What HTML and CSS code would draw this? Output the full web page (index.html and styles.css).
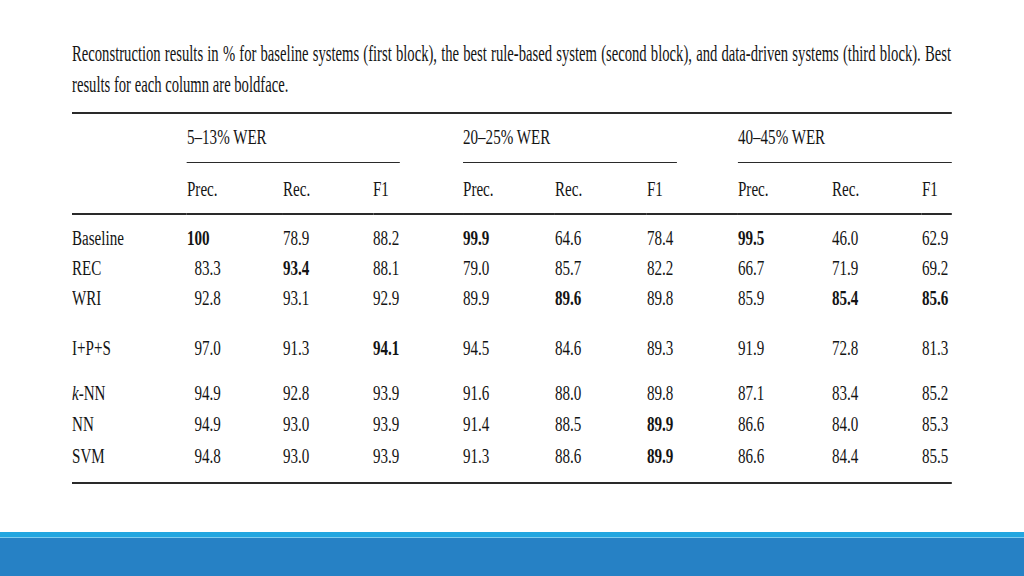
FILE: index.html
```html
<!DOCTYPE html>
<html lang="en">
<head>
<meta charset="utf-8">
<title>Reconstruction results</title>
<link rel="stylesheet" href="styles.css">
</head>
<body>
<div class="slide">
  <main class="content">
    <figure class="figure">
      <p class="caption">Reconstruction results in % for baseline systems (first block), the best rule-based system (second block), and data-driven systems (third block). Best results for each column are boldface.</p>
      <table class="results">
        <colgroup>
          <col class="c-label">
          <col class="c-p1"><col class="c-r1"><col class="c-f1">
          <col class="c-p2"><col class="c-r2"><col class="c-f2">
          <col class="c-p3"><col class="c-r3"><col class="c-f3">
        </colgroup>
        <thead>
          <tr>
            <th class="corner" rowspan="2"></th>
            <th class="group" colspan="3"><div class="group-label g1">5–13% WER</div></th>
            <th class="group" colspan="3"><div class="group-label g2">20–25% WER</div></th>
            <th class="group" colspan="3"><div class="group-label g3">40–45% WER</div></th>
          </tr>
          <tr class="sub">
            <th>Prec.</th><th>Rec.</th><th>F1</th>
            <th>Prec.</th><th>Rec.</th><th>F1</th>
            <th>Prec.</th><th>Rec.</th><th>F1</th>
          </tr>
        </thead>
        <tbody class="block block-base">
          <tr><td class="label">Baseline</td><td class="best whole">100</td><td>78.9</td><td>88.2</td><td class="best">99.9</td><td>64.6</td><td>78.4</td><td class="best">99.5</td><td>46.0</td><td>62.9</td></tr>
          <tr><td class="label">REC</td><td>83.3</td><td class="best">93.4</td><td>88.1</td><td>79.0</td><td>85.7</td><td>82.2</td><td>66.7</td><td>71.9</td><td>69.2</td></tr>
          <tr><td class="label">WRI</td><td>92.8</td><td>93.1</td><td>92.9</td><td>89.9</td><td class="best">89.6</td><td>89.8</td><td>85.9</td><td class="best">85.4</td><td class="best">85.6</td></tr>
        </tbody>
        <tbody class="block block-rule">
          <tr><td class="label">I+P+S</td><td>97.0</td><td>91.3</td><td class="best">94.1</td><td>94.5</td><td>84.6</td><td>89.3</td><td>91.9</td><td>72.8</td><td>81.3</td></tr>
        </tbody>
        <tbody class="block block-data">
          <tr><td class="label"><i>k</i>-NN</td><td>94.9</td><td>92.8</td><td>93.9</td><td>91.6</td><td>88.0</td><td>89.8</td><td>87.1</td><td>83.4</td><td>85.2</td></tr>
          <tr><td class="label">NN</td><td>94.9</td><td>93.0</td><td>93.9</td><td>91.4</td><td>88.5</td><td class="best">89.9</td><td>86.6</td><td>84.0</td><td>85.3</td></tr>
          <tr><td class="label">SVM</td><td>94.8</td><td>93.0</td><td>93.9</td><td>91.3</td><td>88.6</td><td class="best">89.9</td><td>86.6</td><td>84.4</td><td>85.5</td></tr>
        </tbody>
      </table>
    </figure>
  </main>
  <footer class="bar">
    <div class="bar-strip"></div>
    <div class="bar-line"></div>
    <div class="bar-main"></div>
  </footer>
</div>
</body>
</html>
```
FILE: styles.css
```css
:root {
  --k-cap: 0.6104;
  --k-tab: 0.735;
  --ink: #141414;
  --rule: #2a2a2a;
}

html, body {
  margin: 0;
  padding: 0;
  overflow: hidden;
  background: #ffffff;
}

.slide {
  width: 1024px;
  height: 576px;
  display: flex;
  flex-direction: column;
  overflow: hidden;
}

.content {
  flex: 1;
  padding: 38px 0 0 72px;
  overflow: hidden;
}

.figure {
  margin: 0;
  color: var(--ink);
  font-family: "Liberation Serif", "Times New Roman", serif;
}

.caption {
  margin: 0;
  width: 1440px;
  font-size: 24px;
  line-height: 31px;
  text-align: justify;
  transform: scaleX(var(--k-cap));
  transform-origin: left top;
}

.results {
  margin-top: 12px;
  table-layout: fixed;
  width: calc(880px / var(--k-tab));
  border-collapse: separate;
  border-spacing: 0;
  border-top: 2px solid var(--rule);
  border-bottom: 2px solid var(--rule);
  font-size: 20.5px;
  transform: scaleX(var(--k-tab));
  transform-origin: left top;
}

.c-label { width: calc(115px / var(--k-tab)); }
.c-p1 { width: calc(96px / var(--k-tab)); }
.c-r1 { width: calc(90px / var(--k-tab)); }
.c-f1 { width: calc(90px / var(--k-tab)); }
.c-p2 { width: calc(92px / var(--k-tab)); }
.c-r2 { width: calc(92px / var(--k-tab)); }
.c-f2 { width: calc(91px / var(--k-tab)); }
.c-p3 { width: calc(94px / var(--k-tab)); }
.c-r3 { width: calc(90px / var(--k-tab)); }
.c-f3 { width: calc(30px / var(--k-tab)); }

.results th,
.results td {
  padding: 0;
  text-align: left;
  font-weight: normal;
  white-space: nowrap;
  vertical-align: top;
}

.results .corner {
  border-bottom: 2px solid var(--rule);
}

.group-label {
  padding: 8px 0 9.5px;
  line-height: 30px;
  border-bottom: 1.5px solid var(--rule);
}

.g1 { margin-right: calc(63px / var(--k-tab)); }
.g2 { margin-right: calc(61px / var(--k-tab)); }
.g3 { margin-right: 0; }

.results .sub th {
  padding: 11px 0 9px;
  line-height: 30px;
  border-bottom: 2px solid var(--rule);
}

.results tbody td {
  line-height: 30px;
}

.results tbody td:nth-child(2) {
  padding-left: 0.5em;
}

.results tbody td.whole {
  padding-left: 0;
}

.results .best {
  font-weight: bold;
}

.results .block-base tr:first-child td { padding-top: 8px; }
.results .block-rule tr:first-child td { padding-top: 20px; }
.results .block-data td { line-height: 31.5px; }
.results .block-data tr:first-child td { padding-top: 15px; }
.results .block-data tr:last-child td { padding-bottom: 9.5px; }

.bar {
  height: 44px;
  display: flex;
  flex-direction: column;
}

.bar-strip {
  height: 5px;
  background: #22a6e0;
}

.bar-line {
  height: 1px;
  background: #7ccbef;
}

.bar-main {
  flex: 1;
  background: #2681c5;
}
```
